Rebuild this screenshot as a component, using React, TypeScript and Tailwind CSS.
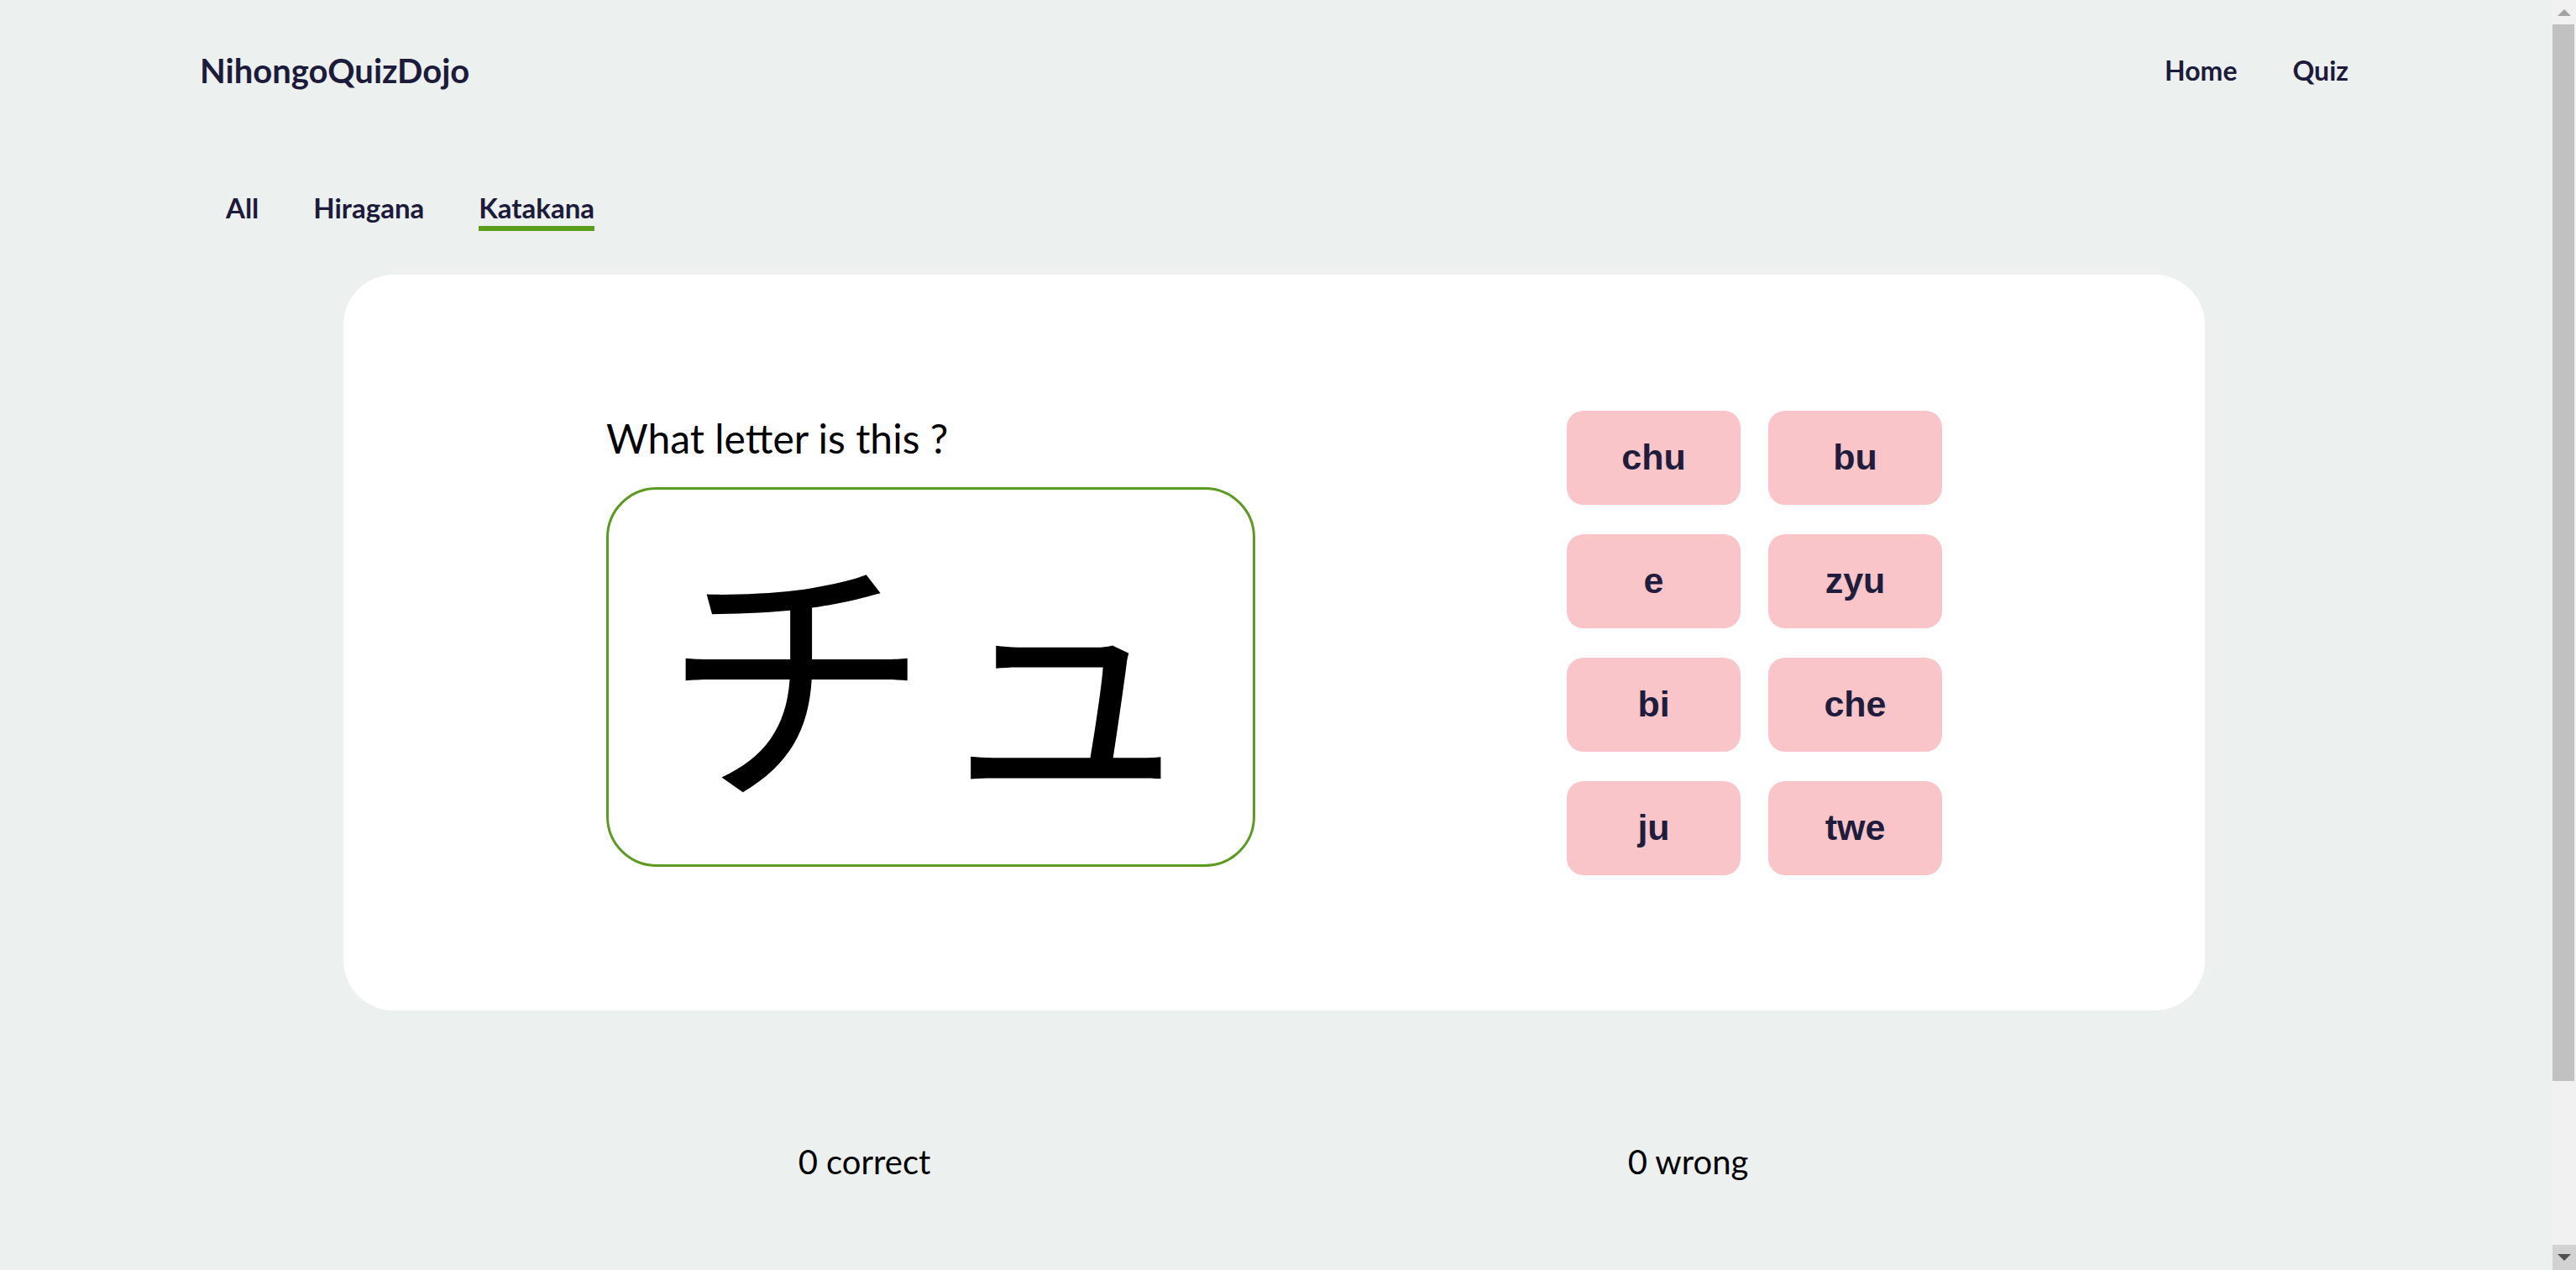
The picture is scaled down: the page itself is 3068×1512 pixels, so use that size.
import React from "react";

const answers = ["chu", "bu", "e", "zyu", "bi", "che", "ju", "twe"];
const tabs = [
  { label: "All", active: false },
  { label: "Hiragana", active: false },
  { label: "Katakana", active: true },
];

function ScrollStrip() {
  return (
    <div className="flex h-screen w-[28px] shrink-0 flex-col bg-[#f1f1f1]">
      <div className="flex h-[29px] items-center justify-center">
        <svg width="16" height="8" viewBox="0 0 16 8">
          <path d="M0 8 L8 0 L16 8 Z" fill="#a3a3a3" />
        </svg>
      </div>
      <div className="mr-[2px] h-[1258px] bg-[#c1c1c1]" />
      <div className="flex-1" />
      <div className="flex h-[30px] items-center justify-center bg-[#d2d2d2]">
        <svg width="16" height="8" viewBox="0 0 16 8">
          <path d="M0 0 L16 0 L8 8 Z" fill="#505050" />
        </svg>
      </div>
    </div>
  );
}

export default function App() {
  return (
    <div className="flex h-screen overflow-hidden bg-[#ecf1ef] font-['Lato','Noto_Sans',sans-serif]">
      <div className="min-w-0 flex-1 overflow-hidden">
        <div className="pb-[340px]">
          <header className="flex items-center justify-between pt-[60px] pl-[238px] pr-[243px]">
            <div className="text-[40px] leading-[48px] font-bold text-[#1d1b3b]">NihongoQuizDojo</div>
            <nav className="flex items-center gap-[66px] text-[32px] leading-[38px] font-bold text-[#1d1b3b]">
              <a href="#">Home</a>
              <a href="#">Quiz</a>
            </nav>
          </header>

          <div className="mt-[120px] flex gap-[65px] pl-[269px] text-[33px] leading-[38px] font-bold text-[#1d1b3b]">
            {tabs.map((t) => (
              <button
                key={t.label}
                className={
                  t.active
                    ? "font-['Lato',sans-serif] font-bold pb-[3px] border-b-[6px] border-[#5c9e1c] cursor-pointer"
                    : "font-['Lato',sans-serif] font-bold pb-[3px] border-b-[6px] border-transparent cursor-pointer"
                }
              >
                {t.label}
              </button>
            ))}
          </div>

          <main className="ml-[409px] mt-[52px] flex h-[876px] w-[2217px] items-center justify-between rounded-[60px] bg-white px-[313px]">
            <section className="flex flex-col pb-[6px]">
              <h2 className="mb-[29px] text-[48px] leading-[58px] font-normal text-black">What letter is this ?</h2>
              <div className="flex h-[452px] w-[773px] items-center justify-center rounded-[60px] border-[3px] border-[#5c9a20] pb-[30px]">
                <span lang="ja" className="font-['Noto_Sans_CJK_JP','Noto_Sans_CJK_SC',sans-serif] text-[320px] leading-none font-normal text-black">
                  チュ
                </span>
              </div>
            </section>

            <section className="grid grid-cols-[207px_207px] gap-x-[33px] gap-y-[35px]">
              {answers.map((a) => (
                <button
                  key={a}
                  className="flex h-[112px] w-[207px] items-center justify-center rounded-[20px] bg-[#f9c5c8] font-['Liberation_Sans',Arial,sans-serif] text-[43px] font-bold text-[#1f1d3d] cursor-pointer"
                >
                  {a}
                </button>
              ))}
            </section>
          </main>

          <div className="mt-[156px] flex justify-center text-[40px] leading-[48px] text-black">
            <div className="w-[981px] text-center">0 correct</div>
            <div className="w-[981px] text-center">0 wrong</div>
          </div>
        </div>
      </div>
      <ScrollStrip />
    </div>
  );
}
